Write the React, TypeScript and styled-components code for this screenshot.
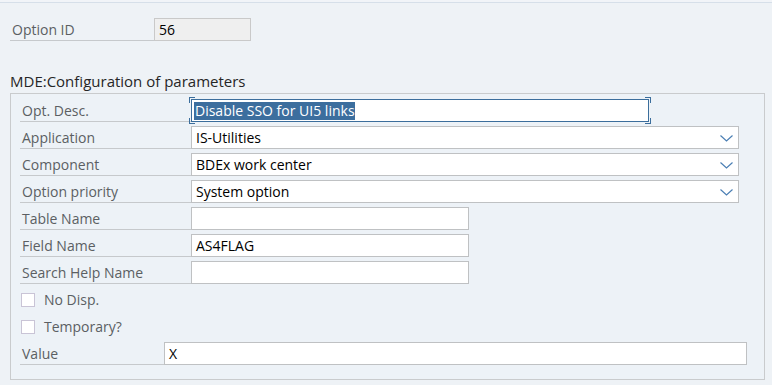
import React from "react";

import styled, { createGlobalStyle } from "styled-components";

const GlobalStyle = createGlobalStyle`
  html,
  body {
    margin: 0;
    padding: 0;
    background: #eef2f6;
  }

  body {
    font-family: "Open Sans", "Noto Sans", sans-serif;
    font-size: 14px;
  }
`;

type Row = {
  label: string;
  value?: string;
  width: number;
  dropdown?: boolean;
};

const rows: Row[] = [
  { label: "Application", value: "IS-Utilities", width: 548, dropdown: true },
  { label: "Component", value: "BDEx work center", width: 548, dropdown: true },
  {
    label: "Option priority",
    value: "System option",
    width: 548,
    dropdown: true,
  },
  { label: "Table Name", width: 278 },
  { label: "Field Name", value: "AS4FLAG", width: 278 },
  { label: "Search Help Name", width: 278 },
];

function Chevron(): JSX.Element {
  return (
    <ChevronIcon width="13" height="7" viewBox="0 0 13 7">
      <path d="M0.5 0.5 L6.5 6 L12.5 0.5" />
    </ChevronIcon>
  );
}

export default function App(): JSX.Element {
  return (
    <Page>
      <GlobalStyle />

      <HeaderRow>
        <Label labelWidth={144}>Option ID</Label>
        <ReadOnlyField>56</ReadOnlyField>
      </HeaderRow>

      <Title>MDE:Configuration of parameters</Title>

      <Panel>
        <FormRow>
          <Label labelWidth={171} indent={2}>
            Opt. Desc.
          </Label>
          <FocusField>
            <Selected>Disable SSO for UI5 links</Selected>
            <Corner corner="tl" />
            <Corner corner="tr" />
            <Corner corner="bl" />
            <Corner corner="br" />
          </FocusField>
        </FormRow>

        {rows.map((row) => (
          <FormRow key={row.label}>
            <Label labelWidth={171} indent={2}>
              {row.label}
            </Label>
            <Field fieldWidth={row.width}>
              <span>{row.value}</span>
              {row.dropdown && <Chevron />}
            </Field>
          </FormRow>
        ))}

        <FormRow>
          <CheckLabel>
            <Box />
            No Disp.
          </CheckLabel>
        </FormRow>

        <FormRow>
          <CheckLabel>
            <Box />
            Temporary?
          </CheckLabel>
        </FormRow>

        <FormRow>
          <Label labelWidth={144} indent={2}>
            Value
          </Label>
          <Field fieldWidth={583}>
            <span>X</span>
          </Field>
        </FormRow>
      </Panel>
    </Page>
  );
}

const Page = styled.div`
  width: 772px;
  height: 385px;
  box-sizing: border-box;
  padding: 0 8px 0 10px;
  border-top: 2px solid #f1f4f8;
  overflow: hidden;

  &::before {
    display: block;
    margin: 0 -8px 0 -10px;
    border-top: 1px solid #d6dfe9;

    content: "";
  }
`;

const HeaderRow = styled.div`
  display: flex;
  margin-top: 15px;
`;

const Label = styled.div<{ labelWidth: number; indent?: number }>`
  display: flex;
  align-items: center;

  width: ${(props) => props.labelWidth}px;
  height: 23px;
  box-sizing: border-box;
  padding-left: ${(props) => props.indent ?? 2}px;
  border-bottom: 1px solid #c6c9cc;

  color: #5b5f63;
  white-space: nowrap;
`;

const ReadOnlyField = styled.div`
  display: flex;
  align-items: center;

  width: 97px;
  height: 23px;
  box-sizing: border-box;
  padding-left: 4px;
  border: 1px solid #c9c9c9;

  color: #000;

  background: #efefef;
`;

const Title = styled.div`
  margin: 29px 0 0;
  height: 23px;
  line-height: 23px;

  color: #262626;
  font-size: 15px;
`;

const Panel = styled.div`
  display: flex;
  flex-direction: column;
  gap: 4px;

  width: 755px;
  box-sizing: border-box;
  padding: 5px 0 14px 9px;
  border: 1px solid #c9cbcd;

  background: #edf2f7;
`;

const FormRow = styled.div`
  display: flex;
  align-items: center;

  height: 23px;
`;

const Field = styled.div<{ fieldWidth: number }>`
  display: flex;
  justify-content: space-between;
  align-items: center;

  width: ${(props) => props.fieldWidth}px;
  height: 23px;
  box-sizing: border-box;
  padding: 0 5px 0 4px;
  border: 1px solid #bfc1c3;

  color: #000;

  background: #ffffff;
`;

const FocusField = styled.div`
  position: relative;
  display: flex;
  align-items: center;

  width: 458px;
  height: 23px;
  box-sizing: border-box;
  padding-left: 2px;
  border: 1px solid #3c6e9c;

  background: #ffffff;
`;

const Selected = styled.span`
  padding: 0 0 0 1px;
  line-height: 18px;

  color: #ffffff;

  background: #3c6e9e;
`;

const Corner = styled.span<{ corner: "tl" | "tr" | "bl" | "br" }>`
  position: absolute;

  width: 5px;
  height: 5px;
  border: 0 solid #3c6e9c;

  ${(props) => (props.corner[0] === "t" ? "top: -3px;" : "bottom: -3px;")}
  ${(props) => (props.corner[1] === "l" ? "left: -3px;" : "right: -3px;")}
  border-${(props) => (props.corner[0] === "t" ? "top" : "bottom")}-width: 1px;
  border-${(props) => (props.corner[1] === "l" ? "left" : "right")}-width: 1px;
`;

const ChevronIcon = styled.svg`
  margin-top: 1px;

  fill: none;
  stroke: #4b7fb4;
  stroke-width: 1.2;
`;

const CheckLabel = styled.label`
  display: flex;
  align-items: center;
  gap: 9px;

  padding-left: 1px;

  color: #5b5f63;
`;

const Box = styled.span`
  width: 14px;
  height: 14px;
  box-sizing: border-box;
  border: 1px solid #c9c4d6;

  background: #ffffff;
`;
